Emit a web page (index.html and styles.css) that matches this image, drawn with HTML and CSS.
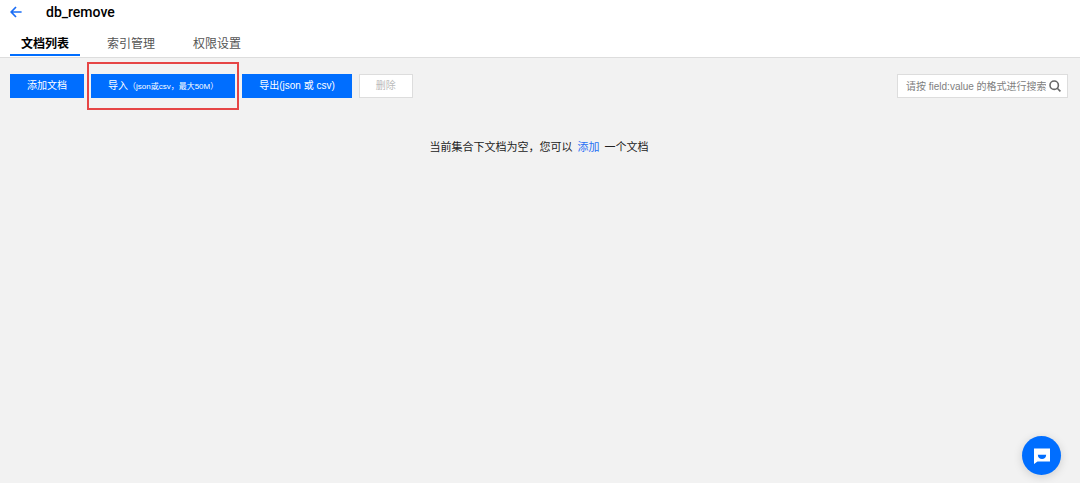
FILE: index.html
```html
<!DOCTYPE html>
<html lang="zh-CN">
<head>
<meta charset="utf-8">
<meta name="viewport" content="width=device-width, initial-scale=1">
<title>db_remove</title>
<link rel="stylesheet" href="styles.css">
</head>
<body>
<header class="header">
  <div class="title-row">
    <button class="back" type="button" aria-label="返回">
      <svg width="12" height="12" viewBox="0 0 12 12" fill="none" stroke="currentColor" stroke-width="1.7"><path d="M11.6 6H1.4M6 1L1.2 6L6 11"/></svg>
    </button>
    <h1 class="title">db_remove</h1>
  </div>
  <nav class="tabs">
    <a class="tab tab-active" href="#docs">文档列表</a>
    <a class="tab" href="#index">索引管理</a>
    <a class="tab" href="#auth">权限设置</a>
  </nav>
</header>
<main class="content">
  <div class="toolbar">
    <button class="btn" type="button">添加文档</button>
    <div class="highlight"><button class="btn" type="button">导入<span class="note">（json或csv，最大50M）</span></button></div>
    <button class="btn" type="button">导出(json 或 csv)</button>
    <button class="btn btn-disabled" type="button" disabled>删除</button>
    <form class="search">
      <input class="search-input" type="text" aria-label="搜索" placeholder="请按 field:value 的格式进行搜索">
      <button class="search-btn" type="submit" aria-label="搜索">
        <svg width="12" height="12" viewBox="0 0 12 12" fill="none" stroke="currentColor" stroke-width="1.6"><circle cx="5.2" cy="5.2" r="4.2"/><path d="M8.3 8.3L11.4 11.4"/></svg>
      </button>
    </form>
  </div>
  <p class="empty">当前集合下文档为空，您可以 <a class="link" href="#add">添加</a> 一个文档</p>
</main>
<button class="chat" type="button" aria-label="客服">
  <svg width="18" height="16" viewBox="0 0 18 16"><path fill="#fff" d="M1 0.5H17V13.5H4.5L1 16Z"/><path fill="#006eff" d="M4.8 6.8H13.2C13 9.8 11.3 11 9 11S5 9.8 4.8 6.8Z"/></svg>
</button>
</body>
</html>
```
FILE: styles.css
```css
* { box-sizing: border-box; }

body {
  margin: 0;
  min-height: 100vh;
  background: #f2f2f2;
  color: #222;
  font-family: "Liberation Sans", "Noto Sans CJK SC", sans-serif;
  font-size: 12px;
}

button, input { font: inherit; }
button { cursor: pointer; }

.header {
  padding: 0 10px;
  background: #fff;
  border-bottom: 1px solid #ddd;
}

.title-row {
  display: flex;
  align-items: center;
  gap: 24px;
  height: 23px;
}

.back {
  display: flex;
  padding: 0;
  border: 0;
  background: none;
  color: #1a6df5;
}

.title {
  margin: 0;
  color: #000;
  font-family: Roboto, sans-serif;
  font-size: 14px;
  font-weight: 500;
}

.tabs {
  display: flex;
  gap: 16px;
  padding-top: 11px;
  padding-bottom: 1px;
}

.tab {
  padding: 0 11px;
  border-bottom: 2px solid transparent;
  color: #555;
  line-height: 20px;
  text-decoration: none;
}

.tab-active {
  border-color: #006eff;
  color: #000;
  font-weight: 700;
}

.content { padding: 16px 12px 0 10px; }

.toolbar {
  display: flex;
  align-items: center;
  gap: 7px;
}

.btn {
  height: 24px;
  padding: 0 16px;
  border: 1px solid #006eff;
  background: #006eff;
  color: #fff;
  font-size: 10px;
  line-height: 22px;
  white-space: nowrap;
}

.note { font-size: 8px; }

.btn-disabled {
  border-color: #ddd;
  background: #fff;
  color: #bbb;
  cursor: default;
}

.highlight {
  position: relative;
  display: flex;
}

.highlight::after {
  content: "";
  position: absolute;
  inset: -12px -4px;
  border: 2px solid #e64545;
  pointer-events: none;
}

.search {
  display: flex;
  align-items: center;
  width: 171px;
  height: 24px;
  margin-left: auto;
  border: 1px solid #ddd;
  background: #fff;
}

.search-input {
  flex: 1;
  min-width: 0;
  padding: 0 0 0 8px;
  border: 0;
  outline: 0;
  background: none;
  color: #333;
  font-size: 10px;
}

.search-input::placeholder { color: #808080; }

.search-btn {
  display: flex;
  padding: 0 6px 0 3px;
  border: 0;
  background: none;
  color: #666;
}

.empty {
  margin: 38px 0 0;
  font-size: 11px;
  line-height: 22px;
  text-align: center;
}

.link {
  margin: 0 2px;
  color: #2670f5;
  text-decoration: none;
}

.chat {
  position: fixed;
  right: 19px;
  bottom: 8px;
  display: flex;
  align-items: center;
  justify-content: center;
  width: 39px;
  height: 39px;
  padding: 0;
  border: 0;
  border-radius: 50%;
  background: #006eff;
  box-shadow: 0 2px 10px rgba(0, 0, 0, 0.15);
}
```
